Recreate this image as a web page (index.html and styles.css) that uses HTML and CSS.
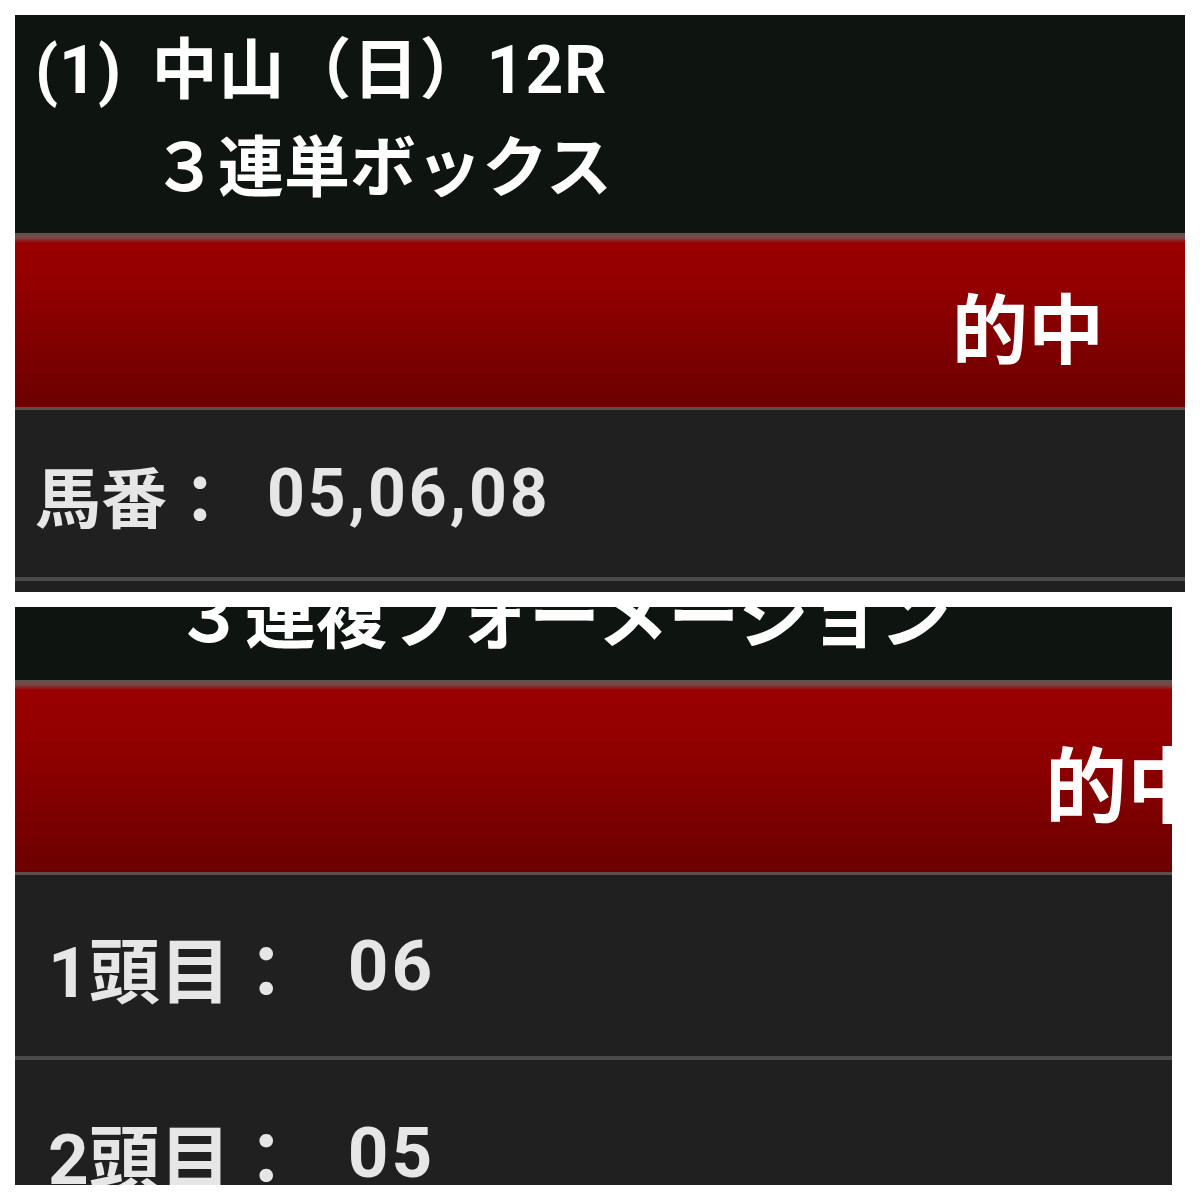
FILE: index.html
```html
<!doctype html>
<html lang="ja">
<head>
  <meta charset="utf-8" />
  <meta name="viewport" content="width=device-width,initial-scale=1" />
  <title>的中</title>
  <link rel="stylesheet" href="styles.css">
</head>
<body>

<div class="collage">

  <section class="shot shot-top">
    <div class="screen">
      <header class="race-head">
        <div class="race-name">(1) 中山（日）12R</div>
        <div class="bet-type">３連単ボックス</div>
      </header>
      <div class="verdict">的中</div>
      <div class="pick-row"><span class="label">馬番：</span><span class="value">05,06,08</span></div>
      <div class="pick-row"></div>
    </div>
  </section>

  <section class="shot shot-bottom">
    <div class="screen">
      <header class="race-head">
        <div class="bet-type">３連複フォーメーション</div>
      </header>
      <div class="verdict">的中</div>
      <div class="pick-row"><span class="label">1頭目：</span><span class="value">06</span></div>
      <div class="pick-row"><span class="label">2頭目：</span><span class="value">05</span></div>
    </div>
  </section>

</div>

</body>
</html>
```

FILE: styles.css
```css
*{box-sizing:border-box;margin:0;padding:0}

body{
  background:#fff;
  font-family:Roboto,"Noto Sans CJK JP",sans-serif;
  font-weight:700;
}

.collage{
  display:flex;
  flex-direction:column;
  gap:15px;
  padding:15px;
}

.shot{
  overflow:hidden;
  background:#202020;
}

/* ---- race header ---- */
.race-head{
  background:#0e1511;
  color:#fff;
}

.race-name,
.bet-type{white-space:nowrap}

/* ---- 的中 band ---- */
.verdict{
  display:flex;
  align-items:center;
  justify-content:flex-end;
  color:#fff;
  background:linear-gradient(#5e5252 0,#7c4646 5px,#9a0000 10px,#930000 30%,#6c0000 100%);
  border-bottom:3px solid #5a4e4e;
}

/* ---- pick rows ---- */
.pick-row{
  display:flex;
  align-items:center;
  color:#e6e6e6;
  border-bottom:4px solid #4a4a4a;
}
.pick-row:last-child{border-bottom:none}
.value{letter-spacing:3px}

/* first screenshot */
.shot-top{height:577px}
.shot-top .race-head{padding:7px 0 15px 20px;font-size:66px;line-height:98px}
.shot-top .race-name{word-spacing:12px;letter-spacing:1px}
.shot-top .bet-type{padding-left:117px}
.shot-top .verdict{height:177px;padding:9px 81px 0 0;font-size:76px}
.shot-top .pick-row{height:171px;padding-left:20px;font-size:66px;gap:34px}

/* second screenshot, a little larger and cropped */
.shot-bottom{width:1157px;height:578px}
.shot-bottom .screen{width:1286px;margin-top:-42px}
.shot-bottom .race-head{padding:0 0 9px 0;font-size:71px;line-height:106px}
.shot-bottom .bet-type{padding-left:159px}
.shot-bottom .verdict{height:195px;padding:8px 92px 0 0;font-size:82px}
.shot-bottom .pick-row{height:185px;padding-left:33px;font-size:71px;gap:46px}
```
